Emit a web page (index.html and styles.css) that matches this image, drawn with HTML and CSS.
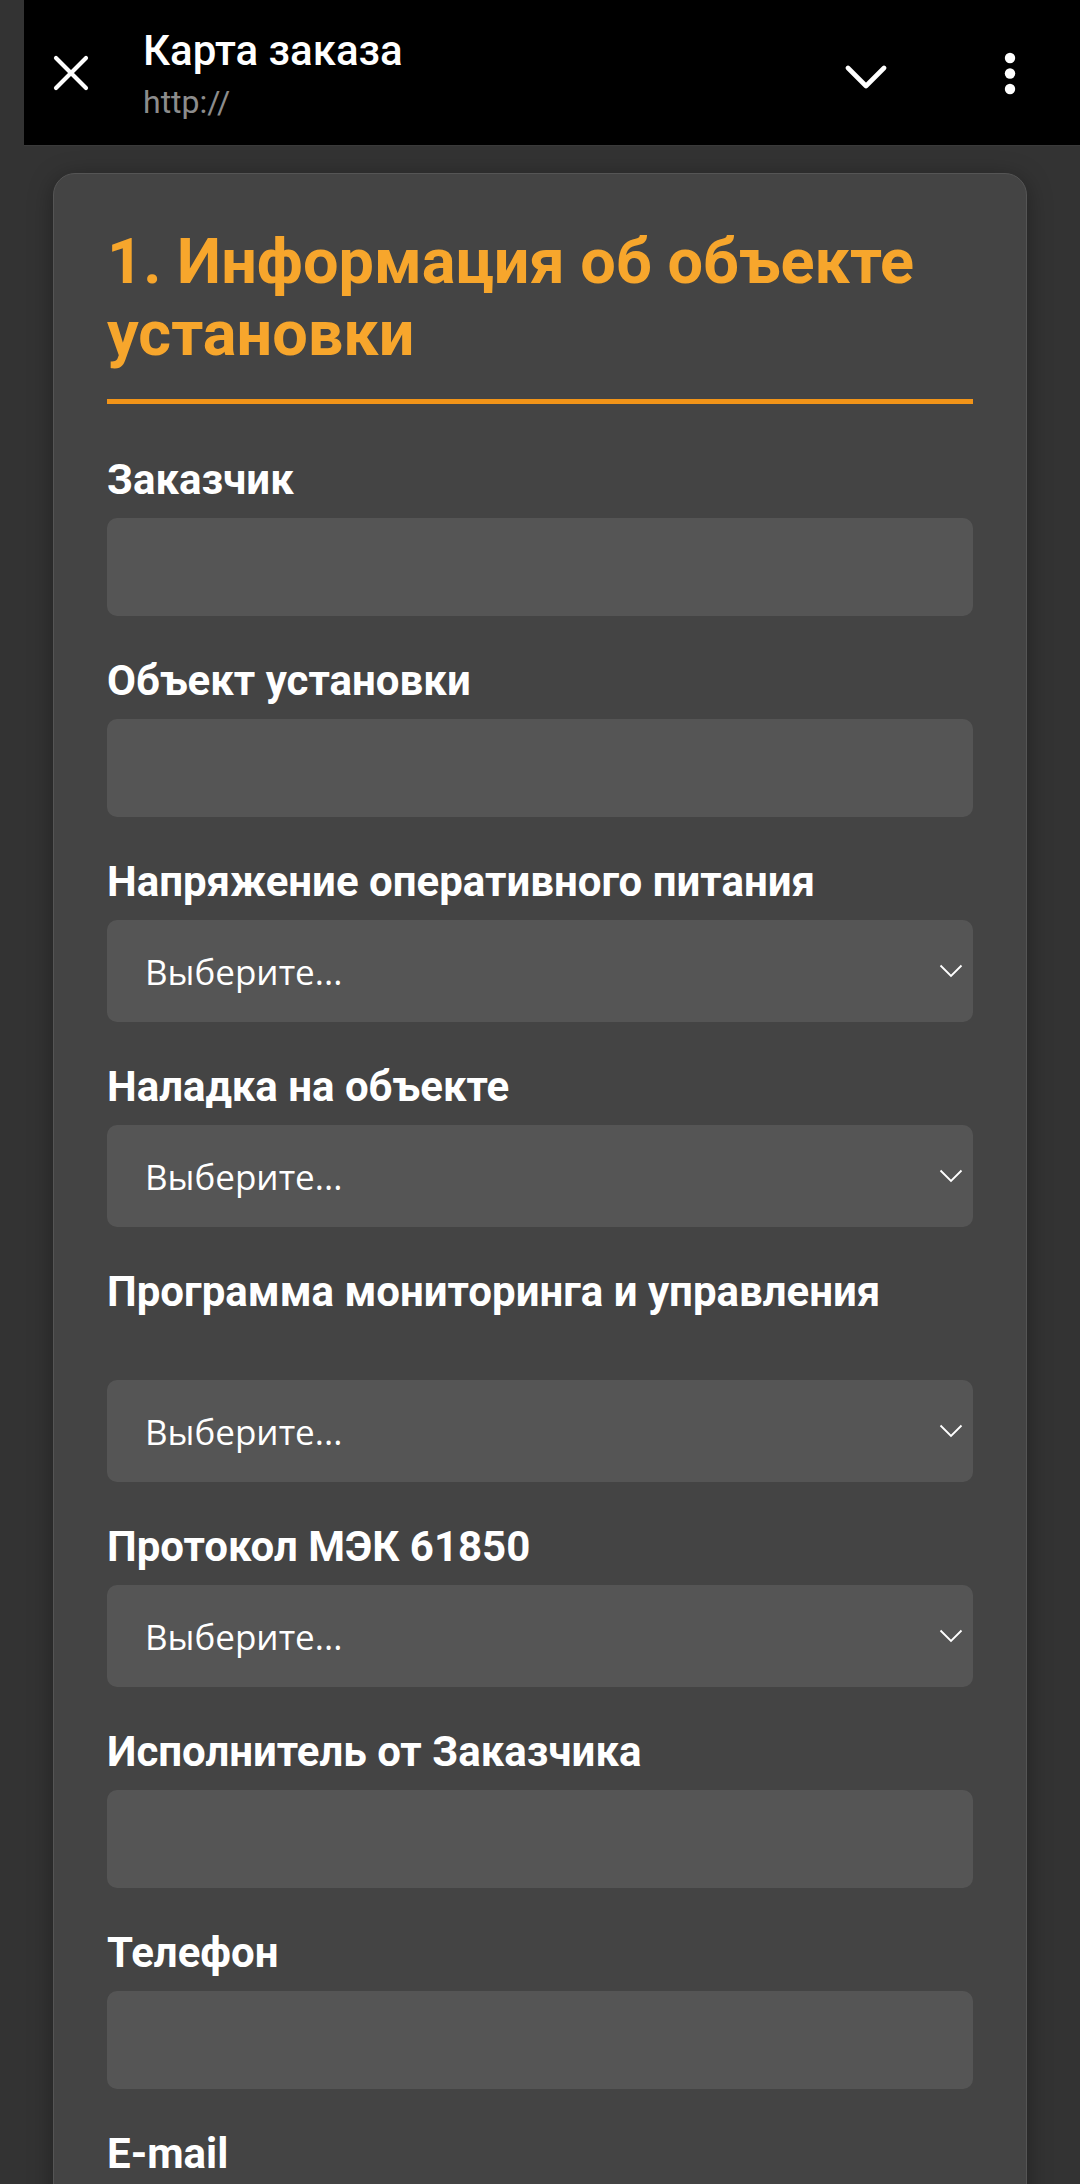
FILE: index.html
```html
<!DOCTYPE html>
<html lang="ru">
<head>
    <meta charset="UTF-8">
    <meta name="viewport" content="width=device-width, initial-scale=1.0">
    <title>Карта заказа</title>
    <link rel="stylesheet" href="styles.css">
</head>
<body>
    <div class="topbar">
        <svg class="icon-close" width="36" height="36" viewBox="0 0 36 36">
            <path d="M3 3 L33 33 M33 3 L3 33" stroke="#fff" stroke-width="4.2" stroke-linecap="round"/>
        </svg>
        <div class="topbar-title">
            <div class="title">Карта заказа</div>
            <div class="url">http://</div>
        </div>
        <svg class="icon-chevron" width="42" height="26" viewBox="0 0 42 26">
            <path d="M3 4 L21 22 L39 4" fill="none" stroke="#fff" stroke-width="4.6" stroke-linecap="round" stroke-linejoin="round"/>
        </svg>
        <svg class="icon-more" width="12" height="46" viewBox="0 0 12 46">
            <circle cx="6" cy="7" r="5.2" fill="#fff"/>
            <circle cx="6" cy="22.5" r="5.2" fill="#fff"/>
            <circle cx="6" cy="38" r="5.2" fill="#fff"/>
        </svg>
    </div>

    <div class="card">
        <h2>1. Информация об объекте установки</h2>

        <div class="field">
            <label>Заказчик</label>
            <input type="text">
        </div>

        <div class="field">
            <label>Объект установки</label>
            <input type="text">
        </div>

        <div class="field">
            <label>Напряжение оперативного питания</label>
            <div class="select-wrap">
                <select><option>Выберите...</option></select>
                <svg class="select-arrow" width="24" height="14" viewBox="0 0 24 14">
                    <path d="M1.5 1.5 L12 12 L22.5 1.5" fill="none" stroke="#fff" stroke-width="1.8"/>
                </svg>
            </div>
        </div>

        <div class="field">
            <label>Наладка на объекте</label>
            <div class="select-wrap">
                <select><option>Выберите...</option></select>
                <svg class="select-arrow" width="24" height="14" viewBox="0 0 24 14">
                    <path d="M1.5 1.5 L12 12 L22.5 1.5" fill="none" stroke="#fff" stroke-width="1.8"/>
                </svg>
            </div>
        </div>

        <div class="field">
            <label class="label-tall">Программа мониторинга и управления</label>
            <div class="select-wrap">
                <select><option>Выберите...</option></select>
                <svg class="select-arrow" width="24" height="14" viewBox="0 0 24 14">
                    <path d="M1.5 1.5 L12 12 L22.5 1.5" fill="none" stroke="#fff" stroke-width="1.8"/>
                </svg>
            </div>
        </div>

        <div class="field">
            <label>Протокол МЭК 61850</label>
            <div class="select-wrap">
                <select><option>Выберите...</option></select>
                <svg class="select-arrow" width="24" height="14" viewBox="0 0 24 14">
                    <path d="M1.5 1.5 L12 12 L22.5 1.5" fill="none" stroke="#fff" stroke-width="1.8"/>
                </svg>
            </div>
        </div>

        <div class="field">
            <label>Исполнитель от Заказчика</label>
            <input type="text">
        </div>

        <div class="field">
            <label>Телефон</label>
            <input type="tel">
        </div>

        <div class="field">
            <label>E-mail</label>
            <input type="email">
        </div>
    </div>
</body>
</html>
```

FILE: styles.css
```css
body {
    margin: 0;
    background-color: #333333;
    font-family: Roboto, "Liberation Sans", sans-serif;
    color: #fff;
}
.topbar {
    height: 145px;
    margin-left: 24px;
    background: #000;
    display: flex;
    align-items: center;
    border-bottom: 1px solid #3a3a3a;
}
.icon-close {
    margin-left: 29px;
    flex-shrink: 0;
}
.topbar-title {
    margin-left: 54px;
    flex: 1;
    padding-top: 2px;
}
.title {
    font-size: 42px;
    font-weight: 500;
    line-height: 50px;
}
.url {
    font-size: 32px;
    line-height: 40px;
    margin-top: 6px;
    color: #8c8c8c;
}
.icon-chevron {
    margin-top: 8px;
    margin-right: 117px;
}
.icon-more {
    margin-top: 3px;
    margin-right: 64px;
}
.card {
    margin: 27px 53px 0;
    background: #444444;
    border: 1px solid #555555;
    border-radius: 22px;
    padding: 52px 53px;
    box-shadow: 0 4px 24px rgba(0,0,0,0.35);
}
h2 {
    margin: 0 0 52px;
    color: #f7a62c;
    font-size: 63px;
    line-height: 72px;
    font-weight: 700;
    padding-bottom: 29px;
    border-bottom: 5px solid #f29418;
}
.field {
    margin-bottom: 41px;
}
label {
    display: block;
    font-size: 42px;
    line-height: 48px;
    font-weight: 700;
    margin-bottom: 14px;
}
.label-tall {
    padding-bottom: 50px;
}
input {
    display: block;
    box-sizing: border-box;
    width: 100%;
    height: 98px;
    border: none;
    border-radius: 10px;
    background: #555555;
    color: #fff;
    font-size: 35px;
    padding: 0 39px;
}
.select-wrap {
    position: relative;
}
select {
    display: block;
    box-sizing: border-box;
    width: 100%;
    height: 102px;
    border: none;
    border-radius: 10px;
    background: #555555;
    color: #fff;
    font-family: "Open Sans", "Noto Sans", sans-serif;
    font-size: 35px;
    padding: 0 60px 0 38px;
    appearance: none;
    -webkit-appearance: none;
}
.select-arrow {
    position: absolute;
    right: 10px;
    top: 44px;
    pointer-events: none;
}
```
